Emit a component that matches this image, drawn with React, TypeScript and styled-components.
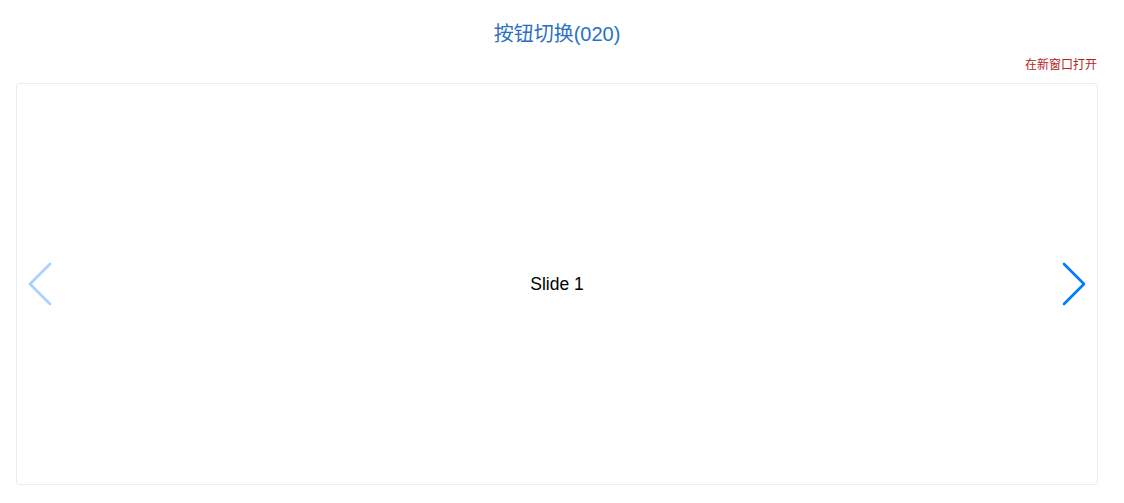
import React, { useState } from 'react'
import styled, { createGlobalStyle } from 'styled-components'

const GlobalStyle = createGlobalStyle`
  html, body {
    margin: 0;
    padding: 0;
    background: #fff;
  }
  body {
    font-family: "Liberation Sans", "Noto Sans CJK SC", Arial, sans-serif;
  }
`

const slides = ['Slide 1', 'Slide 2', 'Slide 3', 'Slide 4']

function Arrow({ dir }: { dir: 'prev' | 'next' }) {
  return (
    <svg width="27" height="44" viewBox="0 0 27 44">
      {dir === 'prev' ? (
        <polyline points="23,2 3,22 23,42" fill="none" stroke="currentColor" strokeWidth="2.6" strokeLinecap="round" strokeLinejoin="round" />
      ) : (
        <polyline points="4,2 24,22 4,42" fill="none" stroke="currentColor" strokeWidth="2.6" strokeLinecap="round" strokeLinejoin="round" />
      )}
    </svg>
  )
}

export default function App() {
  const [index, setIndex] = useState(0)
  const prev = () => setIndex(i => Math.max(0, i - 1))
  const next = () => setIndex(i => Math.min(slides.length - 1, i + 1))
  return (
    <Root>
      <GlobalStyle />
      <Title>按钮切换(020)</Title>
      <OpenLink href="#">在新窗口打开</OpenLink>
      <Swiper>
        <Slide>{slides[index]}</Slide>
        <NavButton side="left" disabled={index === 0} onClick={prev}>
          <Arrow dir="prev" />
        </NavButton>
        <NavButton side="right" disabled={index === slides.length - 1} onClick={next}>
          <Arrow dir="next" />
        </NavButton>
      </Swiper>
    </Root>
  )
}

const Root = styled.div`
  width: 1082px;
  margin-left: 16px;
  padding-top: 20px;
  display: flex;
  flex-direction: column;
`

const Title = styled.h1`
  margin: 0;
  font-size: 20px;
  font-weight: normal;
  line-height: 28px;
  color: #2a71c4;
  text-align: center;
`

const OpenLink = styled.a`
  align-self: flex-end;
  margin-top: 8px;
  margin-right: 1px;
  font-size: 12px;
  line-height: 18px;
  color: #b3251e;
  text-decoration: none;
`

const Swiper = styled.div`
  position: relative;
  margin-top: 9px;
  height: 400px;
  border: 1px solid #ececec;
  border-radius: 3px;
  overflow: hidden;
`

const Slide = styled.div`
  height: 100%;
  display: flex;
  align-items: center;
  justify-content: center;
  font-size: 17.5px;
  color: #000;
`

const NavButton = styled.button<{ side: 'left' | 'right' }>`
  position: absolute;
  top: 50%;
  margin-top: -22px;
  ${p => (p.side === 'left' ? 'left: 10px;' : 'right: 10px;')}
  width: 27px;
  height: 44px;
  padding: 0;
  border: none;
  background: none;
  color: #007aff;
  cursor: pointer;
  display: flex;
  &:disabled {
    opacity: 0.35;
    cursor: auto;
  }
`
